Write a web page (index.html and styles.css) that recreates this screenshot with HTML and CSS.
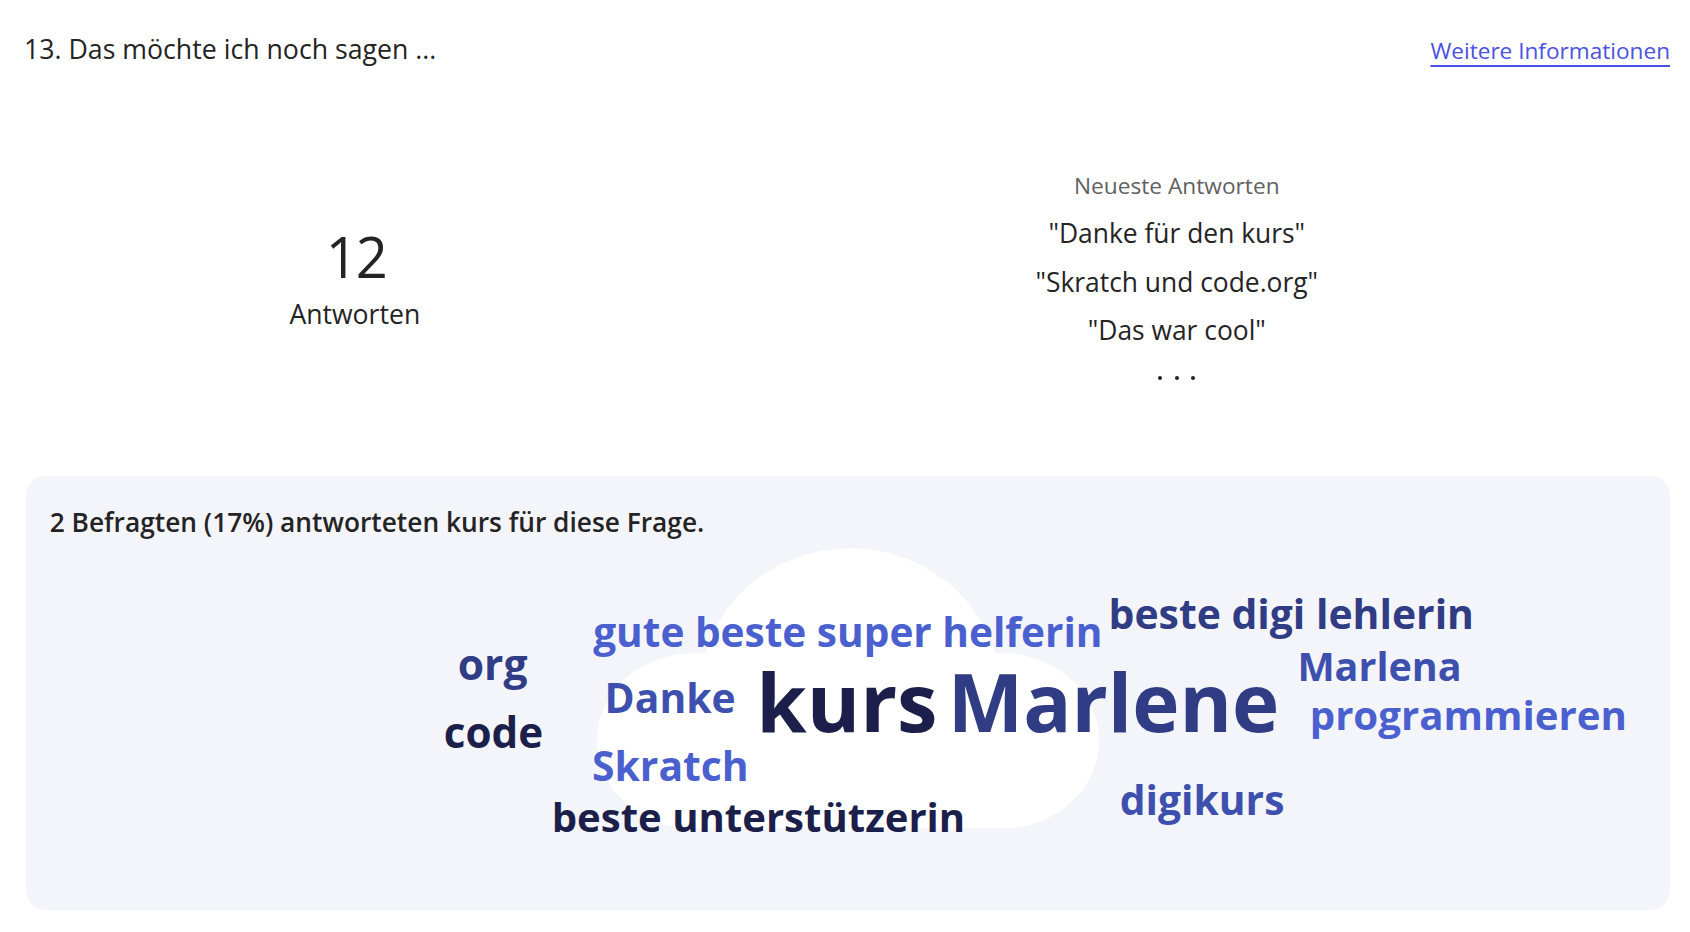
FILE: index.html
```html
<!DOCTYPE html>
<html lang="de">
<head>
<meta charset="utf-8">
<title>13. Das möchte ich noch sagen ...</title>
<link rel="stylesheet" href="styles.css">
</head>
<body>
<div class="page">
  <div class="header">
    <div class="question">13. Das möchte ich noch sagen ...</div>
    <a class="more" href="#">Weitere Informationen</a>
  </div>

  <div class="stats">
    <div class="count-col">
      <div class="count">12</div>
      <div class="count-label">Antworten</div>
    </div>
    <div class="latest-col">
      <div class="latest-title">Neueste Antworten</div>
      <div class="quote">"Danke für den kurs"</div>
      <div class="quote">"Skratch und code.org"</div>
      <div class="quote">"Das war cool"</div>
      <div class="dots"><span class="dot"></span><span class="dot"></span><span class="dot"></span></div>
    </div>
  </div>

  <div class="panel">
    <div class="panel-title">2 Befragten (17%) antworteten kurs für diese Frage.</div>
    <svg class="cloud" viewBox="26 539.7 1644 370.3" width="1644" height="370.3">
      <g class="cloud-shape">
        <ellipse cx="850" cy="690" rx="150" ry="142"></ellipse>
        <rect x="597" y="653" width="502" height="175" rx="97" ry="87"></rect>
      </g>
      <text class="w c2 s-org" x="457.7" y="680">org</text>
      <text class="w c4 s-code" x="443.7" y="748">code</text>
      <text class="w c1 s-gute" x="593.2" y="647">gute beste super helferin</text>
      <text class="w c3 s-danke" x="604.6" y="713">Danke</text>
      <text class="w c4 s-kurs" x="756.2" y="732">kurs</text>
      <text class="w c1 s-skratch" x="592" y="781">Skratch</text>
      <text class="w c4 s-unter" x="551.7" y="832">beste unterstützerin</text>
      <text class="w c2 s-digi" x="1108.6" y="629">beste digi lehlerin</text>
      <text class="w c2 s-marlene" x="947.8" y="732">Marlene</text>
      <text class="w c3 s-marlena" x="1297.4" y="681">Marlena</text>
      <text class="w c1 s-prog" x="1309.7" y="730">programmieren</text>
      <text class="w c3 s-digikurs" x="1119.8" y="815">digikurs</text>
    </svg>
  </div>
</div>
</body>
</html>
```
FILE: styles.css
```css
html, body {
  margin: 0;
  padding: 0;
  background: #ffffff;
}

body {
  font-family: "Open Sans", "Noto Sans", sans-serif;
  color: #242424;
}

.page {
  width: 1690px;
  box-sizing: border-box;
  padding: 31px 20px 0 26px;
}

/* header */
.header {
  display: flex;
  justify-content: space-between;
  align-items: baseline;
  height: 36px;
}

.question {
  font-size: 26.7px;
  line-height: 36px;
  margin-left: -2px;
}

.more {
  font-size: 22.6px;
  line-height: 36px;
  color: #4a52e0;
  text-decoration: underline;
  text-decoration-thickness: 2px;
  text-underline-offset: 6px;
}

/* stats */
.stats {
  display: grid;
  grid-template-columns: 40% 60%;
  height: 409px;
}

.count-col,
.latest-col {
  display: flex;
  flex-direction: column;
  align-items: center;
  text-align: center;
}

.count-col {
  padding-top: 159px;
}

.count {
  font-size: 56px;
  line-height: 60px;
  letter-spacing: -2px;
  padding-left: 2px;
}

.count-label {
  font-size: 26.6px;
  line-height: 36px;
  margin-top: 10.4px;
}

.latest-col {
  padding-top: 104px;
}

.latest-title {
  font-size: 22.7px;
  line-height: 30px;
  color: #616161;
}

.quote {
  font-size: 26.4px;
  line-height: 48.5px;
}

.latest-title + .quote {
  margin-top: 8.3px;
}

.dots {
  display: flex;
  gap: 12.7px;
  margin-top: 21px;
}

.dot {
  width: 4px;
  height: 4px;
  border-radius: 50%;
  background: #242424;
}

/* panel */
.panel {
  height: 434px;
  border-radius: 20px;
  background: #f4f5fb;
  overflow: hidden;
}

.panel-title {
  font-size: 26.3px;
  line-height: 36px;
  font-weight: 600;
  padding: 27.7px 24px 0 23.7px;
  color: #242424;
}

.cloud {
  display: block;
}

.cloud-shape {
  fill: #ffffff;
}

.w {
  font-family: "Open Sans", "Noto Sans", sans-serif;
  font-weight: 700;
}

.c1 { fill: #4b60cf; }
.c2 { fill: #303c83; }
.c3 { fill: #3e50ad; }
.c4 { fill: #1b1f4a; }

.s-org { font-size: 42.6px; }
.s-code { font-size: 42.2px; }
.s-gute { font-size: 40.6px; }
.s-danke { font-size: 40.8px; }
.s-kurs { font-size: 81.4px; }
.s-skratch { font-size: 40.9px; }
.s-unter { font-size: 40.1px; }
.s-digi { font-size: 40.9px; }
.s-marlene { font-size: 80px; }
.s-marlena { font-size: 39.5px; }
.s-prog { font-size: 40.2px; }
.s-digikurs { font-size: 40.8px; }
```
